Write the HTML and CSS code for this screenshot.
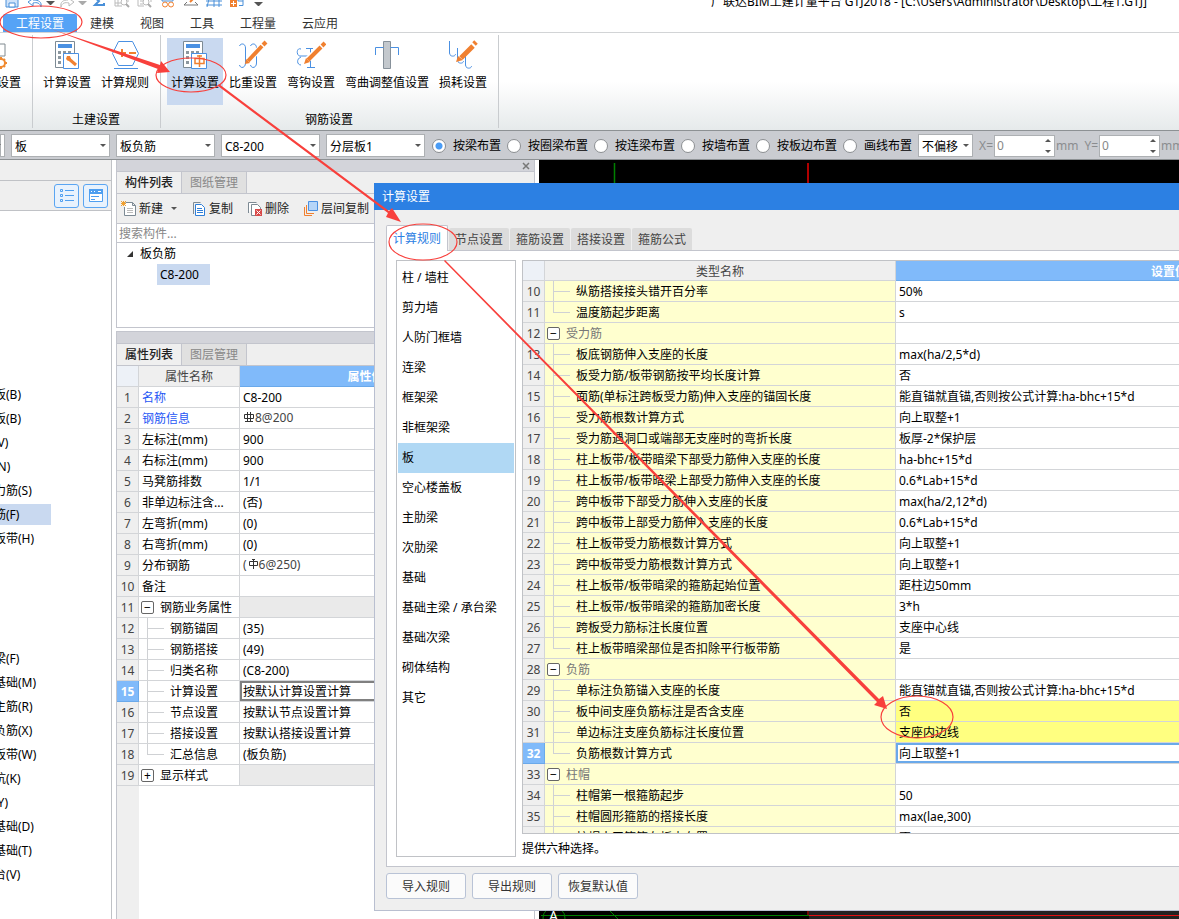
FILE: index.html
```html
<!DOCTYPE html>
<html lang="zh-CN">
<head>
<meta charset="utf-8">
<title>广联达BIM土建计量平台 GTJ2018</title>
<link rel="stylesheet" href="styles.css">
</head>
<body>
<div class="app">
  <header class="titlebar">
    <div class="quick">
      <button class="qbtn" aria-label="保存"><svg width="16" height="14" viewBox="0 0 16 14"><path d="M2 -2h12v9H2z" fill="#cfe3fa" stroke="#4a90d9"/><path d="M5 3h6v4H5z" fill="#fff" stroke="#4a90d9"/></svg></button>
      <button class="qbtn" aria-label="撤销"><svg width="16" height="14" viewBox="0 0 16 14"><path d="M7-2L1 2l5 4V3c4-1 7 0 8 4 1-5-2-7-8-7" fill="none" stroke="#4a90d9"/></svg></button>
      <button class="qcaret" aria-label="撤销列表"></button>
      <button class="qbtn" aria-label="恢复"><svg width="16" height="14" viewBox="0 0 16 14"><path d="M9-2l6 4-5 4V3C6 2 3 3 2 7 1 2 4 0 9 0" fill="none" stroke="#bbb"/></svg></button>
      <button class="qcaret dim" aria-label="恢复列表"></button>
      <button class="qbtn" aria-label="汇总"><svg width="16" height="14" viewBox="0 0 16 14"><path d="M4-2l4 3-4 4h9V3" fill="none" stroke="#4a90d9" stroke-width="2"/></svg></button>
      <button class="qbtn" aria-label="查看工程量"><svg width="16" height="14" viewBox="0 0 16 14"><path d="M1-1v7h7M1 3h6M4 0v6M14-1v3" fill="none" stroke="#bbb"/><circle cx="10" cy="2" r="3" fill="#fff" stroke="#bbb"/><path d="M12 4l3 3" stroke="#aaa" stroke-width="2"/></svg></button>
      <button class="qbtn" aria-label="查找"><svg width="16" height="14" viewBox="0 0 16 14"><path d="M1-1v7h6M3 1h3M3 4h3M14-1v3" fill="none" stroke="#bbb"/><circle cx="9" cy="2" r="3" fill="#fff" stroke="#bbb"/><path d="M11 4l3 3" stroke="#aaa" stroke-width="2"/></svg></button>
      <button class="qbtn" aria-label="查看"><svg width="16" height="14" viewBox="0 0 16 14"><path d="M2-1v2h11v-2" fill="none" stroke="#4a90d9"/><circle cx="5" cy="4.500" r="2.500" fill="none" stroke="#f08030"/><circle cx="11" cy="4.500" r="2.500" fill="none" stroke="#f08030"/></svg></button>
      <button class="qbtn" aria-label="编辑"><svg width="16" height="14" viewBox="0 0 16 14"><path d="M7 2l5-5" stroke="#f08030" stroke-width="2"/><path d="M4 2L1 5h14l-3-3" fill="none" stroke="#777"/></svg></button>
      <button class="qbtn" aria-label="轴网"><svg width="16" height="14" viewBox="0 0 16 14"><path d="M3-1L1 7M8-1v8M13-1v8M0 1h16M0 5h16" fill="none" stroke="#4a90d9"/></svg></button>
      <button class="qbtn" aria-label="添加"><svg width="16" height="14" viewBox="0 0 16 14"><path d="M1 0h7v7H1z" fill="#f08030"/><path d="M2 3.500h5M4.500 1v5" stroke="#fff"/><path d="M9-2v3h5v-3M10 5.500h4V1" fill="none" stroke="#4a90d9"/></svg></button>
      <button class="qcaret low" aria-label="自定义快速访问"></button>
    </div>
    <h1 class="app-title">广联达BIM土建计量平台 GTJ2018 - [C:\Users\Administrator\Desktop\工程1.GTJ]</h1>
  </header>

  <nav class="menu">
    <a href="#" class="menu-tab active">工程设置</a>
    <a href="#" class="menu-tab">建模</a>
    <a href="#" class="menu-tab">视图</a>
    <a href="#" class="menu-tab">工具</a>
    <a href="#" class="menu-tab">工程量</a>
    <a href="#" class="menu-tab">云应用</a>
  </nav>

  <section class="ribbon">
    <div class="group group-cut">
      <div class="tools">
        <button class="tool"><svg width="30" height="30" viewBox="0 0 30 30"><path d="M12 4h11v12H12M17 4v7M12 26h6" fill="none" stroke="#808a90"/><circle cx="19" cy="23" r="4" fill="#fff" stroke="#f08a30" stroke-width="2"/><path d="M19 17v2M19 27v2M13 23h2M23 23h2M15 19l1 1M22 26l1 1M15 27l1-1M22 20l1-1" stroke="#f08a30" stroke-width="2"/></svg>楼层设置</button>
      </div>
    </div>
    <div class="group">
      <div class="tools">
        <button class="tool"><svg width="30" height="30" viewBox="0 0 30 30"><path d="M3.500 1.500h19v26h-19z" fill="#fff" stroke="#7d8a94"/><path d="M6 4h14v4H6z" fill="#4a90e2"/><path d="M6 11h3v3H6zM11 11h3v3h-3zM16 11h3v3h-3zM6 16h3v3H6zM6 21h3v3H6z" fill="#8c979f"/><path d="M11.500 13.500h15v15h-15z" fill="#fff" stroke="#4a90e2"/><path d="M17 19l7 6" stroke="#f08030" stroke-width="3"/><path d="M15 16l3 0 1 3-3 2-2-2z" fill="#f08030"/></svg>计算设置</button>
        <button class="tool"><svg width="30" height="30" viewBox="0 0 30 30"><path d="M8.500 1.500h14l6 12-6 12h-14l-6-12zM4 28.500h24" fill="none" stroke="#4a90e2"/><path d="M8 13h8M12 9v8M19 13h7" stroke="#f08030" stroke-width="2"/></svg>计算规则</button>
      </div>
      <div class="group-name">土建设置</div>
    </div>
    <div class="group">
      <div class="tools">
        <button class="tool selected"><svg width="30" height="30" viewBox="0 0 30 30"><path d="M3.500 1.500h19v26h-19z" fill="#fff" stroke="#7d8a94"/><path d="M6 4h14v4H6z" fill="#4a90e2"/><path d="M6 11h3v3H6zM11 11h3v3h-3zM16 11h3v3h-3zM6 16h3v3H6zM6 21h3v3H6z" fill="#8c979f"/><path d="M11.500 13.500h15v15h-15z" fill="#fff" stroke="#4a90e2"/><path d="M15 18.500h9v5h-9zM19.500 15v12M17 16h5" fill="none" stroke="#f08030" stroke-width="1.500"/></svg>计算设置</button>
        <button class="tool"><svg width="30" height="30" viewBox="0 0 30 30"><path d="M1.500 6c1-3 6-3 6 2v15c0 5-5 6-6 2M12.500 6c1-3 6-3 6 2v15c0 5-5 6-6 2" fill="none" stroke="#4a90e2"/><path d="M12 19L26 4" stroke="#fff" stroke-width="6"/><path d="M10 21L24 6" stroke="#f08030" stroke-width="4"/><path d="M25 5l3-3" stroke="#f08030" stroke-width="4"/><path d="M7 24l1-5 4 4z" fill="#f08030"/></svg>比重设置</button>
        <button class="tool"><svg width="30" height="30" viewBox="0 0 30 30"><path d="M5 9c-5-2-5 8 0 7h9M5 17c-5 2-4 8 0 8M17 8.500h-7M14.500 8v19M11 27.500h8" fill="none" stroke="#4a90e2"/><path d="M12 19L26 5" stroke="#fff" stroke-width="6"/><path d="M12 20L25 7" stroke="#f08030" stroke-width="4"/><path d="M26 6l3-3" stroke="#f08030" stroke-width="4"/><path d="M8 24l2-6 4 4z" fill="#f08030"/></svg>弯钩设置</button>
        <button class="tool"><svg width="30" height="30" viewBox="0 0 30 30"><path d="M11.500 1.500h7v27h-7z" fill="#c3c8cd" stroke="#87919a"/><path d="M3.500 15V7.500h8M18.500 7.500h8V15" fill="none" stroke="#4a90e2"/></svg>弯曲调整值设置</button>
        <button class="tool"><svg width="30" height="30" viewBox="0 0 30 30"><path d="M1.500 1v12c0 4 6 4 6 1M9.500 8v12c0 4 6 4 6 1M17.500 16v9c0 4 6 4 6 1" fill="none" stroke="#4a90e2"/><path d="M13 18L25 6" stroke="#f08030" stroke-width="5"/><path d="M26 4l2-2" stroke="#f08030" stroke-width="5"/><path d="M8 22l2-6 5 4z" fill="#f08030"/></svg>损耗设置</button>
      </div>
      <div class="group-name">钢筋设置</div>
    </div>
  </section>

  <form class="options">
    <span class="select sel-cut"><select aria-label="楼层"><option></option></select></span>
    <span class="select"><select aria-label="构件类别"><option>板</option></select></span>
    <span class="select"><select aria-label="构件类型"><option>板负筋</option></select></span>
    <span class="select"><select aria-label="构件"><option>C8-200</option></select></span>
    <span class="select"><select aria-label="分层"><option>分层板1</option></select></span>
    <span class="placing">
      <label class="radio"><input type="radio" name="place" checked>按梁布置</label>
      <label class="radio"><input type="radio" name="place">按圈梁布置</label>
      <label class="radio"><input type="radio" name="place">按连梁布置</label>
      <label class="radio"><input type="radio" name="place">按墙布置</label>
      <label class="radio"><input type="radio" name="place">按板边布置</label>
      <label class="radio"><input type="radio" name="place">画线布置</label>
    </span>
    <span class="select sel-small"><select aria-label="偏移"><option>不偏移</option></select></span>
    <label class="offset">X=<span class="spin"><input type="text" value="0" disabled></span>mm</label>
    <label class="offset">Y=<span class="spin"><input type="text" value="0" disabled></span>mm</label>
  </form>

  <main class="workspace">
    <aside class="modules">
      <div class="modules-head"></div>
      <div class="modules-bar">
        <button class="view-btn" aria-label="列表视图"><svg width="18" height="18" viewBox="0 0 18 18"><path d="M2.500 2.500h2v2h-2zM2.500 7.500h2v2h-2zM2.500 12.500h2v2h-2zM7 3.500h9M7 8.500h9M7 13.500h9" fill="none" stroke="#4f9ff0"/></svg></button>
        <button class="view-btn" aria-label="卡片视图"><svg width="18" height="18" viewBox="0 0 18 18"><path d="M2.500 2.500h13v12h-13z" fill="#fff" stroke="#4f9ff0"/><path d="M2 2h14v5H2z" fill="#4f9ff0"/><path d="M4 4.500h1M7 4.500h1M11 4.500h3" stroke="#fff"/><path d="M4 9.500h8M4 12.500h4" stroke="#4f9ff0"/></svg></button>
      </div>
      <div class="modules-list">
        <ul>
          <li>现浇板(B)</li><li>螺旋板(B)</li><li>柱帽(V)</li><li>板洞(N)</li><li>板受力筋(S)</li><li><span class="current">板负筋(F)</span></li><li>楼层板带(H)</li>
        </ul>
        <ul>
          <li>基础梁(F)</li><li>筏板基础(M)</li><li>筏板主筋(R)</li><li>筏板负筋(X)</li><li>基础板带(W)</li><li>集水坑(K)</li><li>柱墩(Y)</li><li>独立基础(D)</li><li>条形基础(T)</li><li>桩承台(V)</li>
        </ul>
      </div>
    </aside>

    <div class="docks">
      <section class="dock">
        <div class="dock-strip"><button class="close" aria-label="关闭"><svg width="8" height="8" viewBox="0 0 8 8"><path d="M1 1l6 6M7 1L1 7" stroke="#777" stroke-width="1.500"/></svg></button></div>
        <div class="dock-tabs"><button class="dock-tab on">构件列表</button><button class="dock-tab">图纸管理</button></div>
        <div class="dock-tools">
          <button class="act"><svg width="16" height="16" viewBox="0 0 16 16"><path d="M4.500 1.500h7l3 3v10h-11V6M11.500 1.500v3h3" fill="#fff" stroke="#7d8a94"/><path d="M6 7.500h6M6 9.500h6M6 11.500h6" stroke="#bbb"/><path d="M0 0l5 5M5 0L0 5M2.500 0v5M0 2.500h5" stroke="#f0a030"/></svg>新建<i class="tri"></i></button>
          <button class="act"><svg width="16" height="16" viewBox="0 0 16 16"><path d="M2.500 13V1.500h7" fill="none" stroke="#7d8a94"/><path d="M4.500 3.500h6l3 3v8h-9z" fill="#fff" stroke="#2f7fd8"/><path d="M6 7.500h5M6 9.500h6M6 11.500h6" stroke="#2f7fd8"/></svg>复制</button>
          <button class="act"><svg width="16" height="16" viewBox="0 0 16 16"><path d="M1.500 12V1.500h8M4.500 14.500v-11h6l3 3v8z" fill="#fff" stroke="#7d8a94"/><path d="M8 8h7v7H8z" fill="#d84a4a"/><path d="M9.500 9.500l4 4M13.500 9.500l-4 4" stroke="#fff"/></svg>删除</button>
          <button class="act"><svg width="16" height="16" viewBox="0 0 16 16"><path d="M1.500 6v8.500H9M3.500 4v8.500H11" fill="none" stroke="#f08030"/><path d="M5.500.500h9v9h-9z" fill="#b5d5f8" stroke="#4a90e2"/></svg>层间复制</button>
        </div>
        <input class="search" type="text" placeholder="搜索构件..." aria-label="搜索构件">
        <div class="tree">
          <div class="tree-root"><i class="open"></i>板负筋</div>
          <div class="tree-leaf">C8-200</div>
        </div>
      </section>

      <section class="dock grow">
        <div class="dock-strip"></div>
        <div class="dock-tabs"><button class="dock-tab on">属性列表</button><button class="dock-tab">图层管理</button></div>
        <div class="prop-wrap">
        <table class="grid props">
          <colgroup><col class="c-num"><col class="c-prop"><col class="c-val"><col></colgroup>
          <thead><tr><th class="corner"></th><th>属性名称</th><th class="hot">属性值</th><th>附加</th></tr></thead>
          <tbody>
            <tr><th>1</th><td class="link">名称</td><td>C8-200</td><td></td></tr>
            <tr><th>2</th><td class="link">钢筋信息</td><td class="steel"><svg width="12" height="12" viewBox="-1 0 12 12"><path d="M.500 2.500h9v4h-9zM3.500 0v9M6.500 0v9M1 9.500h8" fill="none" stroke="#333"/></svg>8@200</td><td></td></tr>
            <tr><th>3</th><td>左标注(mm)</td><td>900</td><td></td></tr>
            <tr><th>4</th><td>右标注(mm)</td><td>900</td><td></td></tr>
            <tr><th>5</th><td>马凳筋排数</td><td>1/1</td><td></td></tr>
            <tr><th>6</th><td>非单边标注含...</td><td>(否)</td><td></td></tr>
            <tr><th>7</th><td>左弯折(mm)</td><td>(0)</td><td></td></tr>
            <tr><th>8</th><td>右弯折(mm)</td><td>(0)</td><td></td></tr>
            <tr><th>9</th><td>分布钢筋</td><td class="steel">(<svg width="12" height="12" viewBox="0 0 12 12"><path d="M2.500 2.500h8v4h-8zM6.500 0v10M5 .500h3" fill="none" stroke="#333"/></svg>6@250)</td><td></td></tr>
            <tr><th>10</th><td>备注</td><td></td><td></td></tr>
            <tr><th>11</th><td class="branch"><button class="fold" aria-label="折叠">−</button>钢筋业务属性</td><td class="void"></td><td class="void"></td></tr>
            <tr><th>12</th><td class="leaf">钢筋锚固</td><td>(35)</td><td></td></tr>
            <tr><th>13</th><td class="leaf">钢筋搭接</td><td>(49)</td><td></td></tr>
            <tr><th>14</th><td class="leaf">归类名称</td><td>(C8-200)</td><td></td></tr>
            <tr><th class="cur">15</th><td class="leaf">计算设置</td><td class="focus-dark">按默认计算设置计算</td><td></td></tr>
            <tr><th>16</th><td class="leaf">节点设置</td><td>按默认节点设置计算</td><td></td></tr>
            <tr><th>17</th><td class="leaf">搭接设置</td><td>按默认搭接设置计算</td><td></td></tr>
            <tr><th>18</th><td class="leaf last">汇总信息</td><td>(板负筋)</td><td></td></tr>
            <tr><th>19</th><td class="branch"><button class="fold" aria-label="展开">+</button>显示样式</td><td class="void"></td><td class="void"></td></tr>
          </tbody>
        </table>
        </div>
      </section>
    </div>

    <div class="canvas">
      <svg width="640" height="23" viewBox="0 0 640 23"><path d="M75.500 3v20" stroke="#008000" stroke-width="1.500"/><path d="M269 3v20" stroke="#b00000" stroke-width="2"/></svg>
      <svg width="640" height="8" viewBox="0 0 640 8"><path d="M270 0h370v8H270z" fill="#222"/><circle cx="15" cy="7" r="11" fill="none" stroke="#008000"/><path d="M2 4.500h268M71 0l8 8" stroke="#008000"/><path d="M269 0v4M270 4.500h370" stroke="#e01010"/><text class="axis" x="10" y="10">A</text></svg>
    </div>
  </main>

  <section class="dialog" role="dialog" aria-label="计算设置">
    <h2 class="dialog-title">计算设置</h2>
    <div class="dialog-body">
      <div class="tabs">
        <button class="tab on">计算规则</button><button class="tab">节点设置</button><button class="tab">箍筋设置</button><button class="tab">搭接设置</button><button class="tab">箍筋公式</button>
      </div>
      <div class="pane">
        <ul class="kinds">
          <li>柱 / 墙柱</li><li>剪力墙</li><li>人防门框墙</li><li>连梁</li><li>框架梁</li><li>非框架梁</li><li class="on">板</li><li>空心楼盖板</li><li>主肋梁</li><li>次肋梁</li><li>基础</li><li>基础主梁 / 承台梁</li><li>基础次梁</li><li>砌体结构</li><li>其它</li>
        </ul>
        <div class="rules-col">
          <div class="rules-wrap">
          <table class="grid rules">
            <colgroup><col class="c-num"><col class="c-rule"><col class="c-set"></colgroup>
            <thead><tr><th class="corner"></th><th>类型名称</th><th class="hot">设置值</th></tr></thead>
            <tbody>
              <tr><th>10</th><td class="leaf">纵筋搭接接头错开百分率</td><td>50%</td></tr>
              <tr><th>11</th><td class="leaf last">温度筋起步距离</td><td>s</td></tr>
              <tr><th>12</th><td class="branch"><button class="fold" aria-label="折叠">−</button>受力筋</td><td></td></tr>
              <tr><th>13</th><td class="leaf">板底钢筋伸入支座的长度</td><td>max(ha/2,5*d)</td></tr>
              <tr><th>14</th><td class="leaf">板受力筋/板带钢筋按平均长度计算</td><td>否</td></tr>
              <tr><th>15</th><td class="leaf">面筋(单标注跨板受力筋)伸入支座的锚固长度</td><td>能直锚就直锚,否则按公式计算:ha-bhc+15*d</td></tr>
              <tr><th>16</th><td class="leaf">受力筋根数计算方式</td><td>向上取整+1</td></tr>
              <tr><th>17</th><td class="leaf">受力筋遇洞口或端部无支座时的弯折长度</td><td>板厚-2*保护层</td></tr>
              <tr><th>18</th><td class="leaf">柱上板带/板带暗梁下部受力筋伸入支座的长度</td><td>ha-bhc+15*d</td></tr>
              <tr><th>19</th><td class="leaf">柱上板带/板带暗梁上部受力筋伸入支座的长度</td><td>0.6*Lab+15*d</td></tr>
              <tr><th>20</th><td class="leaf">跨中板带下部受力筋伸入支座的长度</td><td>max(ha/2,12*d)</td></tr>
              <tr><th>21</th><td class="leaf">跨中板带上部受力筋伸入支座的长度</td><td>0.6*Lab+15*d</td></tr>
              <tr><th>22</th><td class="leaf">柱上板带受力筋根数计算方式</td><td>向上取整+1</td></tr>
              <tr><th>23</th><td class="leaf">跨中板带受力筋根数计算方式</td><td>向上取整+1</td></tr>
              <tr><th>24</th><td class="leaf">柱上板带/板带暗梁的箍筋起始位置</td><td>距柱边50mm</td></tr>
              <tr><th>25</th><td class="leaf">柱上板带/板带暗梁的箍筋加密长度</td><td>3*h</td></tr>
              <tr><th>26</th><td class="leaf">跨板受力筋标注长度位置</td><td>支座中心线</td></tr>
              <tr><th>27</th><td class="leaf last">柱上板带暗梁部位是否扣除平行板带筋</td><td>是</td></tr>
              <tr><th>28</th><td class="branch"><button class="fold" aria-label="折叠">−</button>负筋</td><td></td></tr>
              <tr><th>29</th><td class="leaf">单标注负筋锚入支座的长度</td><td>能直锚就直锚,否则按公式计算:ha-bhc+15*d</td></tr>
              <tr><th>30</th><td class="leaf">板中间支座负筋标注是否含支座</td><td class="changed">否</td></tr>
              <tr><th>31</th><td class="leaf">单边标注支座负筋标注长度位置</td><td class="changed">支座内边线</td></tr>
              <tr><th class="cur">32</th><td class="leaf last">负筋根数计算方式</td><td class="focus-blue">向上取整+1</td></tr>
              <tr><th>33</th><td class="branch"><button class="fold" aria-label="折叠">−</button>柱帽</td><td></td></tr>
              <tr><th>34</th><td class="leaf">柱帽第一根箍筋起步</td><td>50</td></tr>
              <tr><th>35</th><td class="leaf">柱帽圆形箍筋的搭接长度</td><td>max(lae,300)</td></tr>
              <tr><th></th><td class="leaf">柱帽水平箍筋在板内布置</td><td>否</td></tr>
            </tbody>
          </table>
          </div>
          <p class="hint">提供六种选择。</p>
        </div>
      </div>
      <div class="buttons">
        <button class="btn">导入规则</button><button class="btn">导出规则</button><button class="btn">恢复默认值</button>
      </div>
    </div>
  </section>

  <svg class="marks" width="1179" height="919" viewBox="0 0 1179 919" aria-hidden="true">
    <g fill="none" stroke="#f8403c" stroke-width="1.200">
      <ellipse cx="41" cy="22" rx="41" ry="16"/>
      <ellipse cx="191" cy="75" rx="35" ry="17"/>
      <ellipse cx="423" cy="242" rx="34" ry="18"/>
      <ellipse cx="917" cy="717" rx="36" ry="21"/>
    </g>
    <g fill="#f8403c">
      <path d="M51 29L160 65l1-4 9 11-13 1 1-4z"/>
      <path d="M219 84l170 127 3-3 9 14-15-5 2-4L218 86z"/>
      <path d="M445 260l434 439 4-3 4 13-13-4 3-3L444 261z"/>
    </g>
  </svg>
</div>
</body>
</html>
```
FILE: styles.css
```css
* { box-sizing: border-box; }

body {
  margin: 0;
  background: #fff;
  color: #000;
  font: 12px/20px "Noto Sans", "Noto Sans CJK SC", sans-serif;
}

button, input, select {
  font: inherit;
  color: inherit;
  margin: 0;
}

button {
  padding: 0;
  border: 0;
  background: none;
  white-space: nowrap;
}

ul {
  margin: 0;
  padding: 0;
  list-style: none;
}

.app {
  position: relative;
  display: flex;
  flex-direction: column;
  height: 100vh;
  overflow: hidden;
}

/* title bar and menu */
.titlebar {
  display: flex;
  justify-content: space-between;
  align-items: flex-start;
  height: 14px;
  flex: none;
}

.quick {
  display: flex;
  align-items: flex-start;
}

.qbtn {
  display: flex;
  justify-content: center;
  width: 23px;
  height: 14px;
}

.qcaret {
  width: 9px;
  height: 6px;
}

.qcaret::after {
  content: "";
  display: block;
  border: 4px solid transparent;
  border-top-color: #555;
  border-bottom: 0;
}

.qcaret.dim::after { border-top-color: #aaa; }
.qcaret.low { margin: 1px 0 0 6px; }

.app-title {
  margin: 0;
  padding-right: 32px;
  font-size: 12px;
  font-weight: 400;
  line-height: 4px;
  white-space: nowrap;
}

.menu {
  display: flex;
  flex: none;
  padding-left: 3px;
  border-bottom: 1px solid #d2d4d6;
}

.menu-tab {
  padding: 1px 13px 0;
  line-height: 17px;
  color: #333;
  text-decoration: none;
}

.menu-tab.active {
  background: #55a3f6;
  border-radius: 2px 2px 0 0;
  color: #fff;
}

/* ribbon */
.ribbon {
  display: flex;
  flex: none;
  height: 97px;
  padding: 2px 0;
  background: linear-gradient(#fff 50%, #e6eaeb);
}

.group {
  display: flex;
  flex-direction: column;
  align-items: center;
  padding: 3px 7px 0 6px;
  border-right: 1px solid #c9cccf;
}

.group-cut {
  width: 33px;
  align-items: flex-end;
  overflow: hidden;
}

.tools {
  display: flex;
  gap: 2px;
}

.group-name { margin-top: 5px; }

.tool {
  display: flex;
  flex-direction: column;
  align-items: center;
  height: 67px;
  padding: 2px 4px 0;
  gap: 3px;
}

.tool.selected { background: #c9d9f0; }

/* option bar */
.options {
  display: flex;
  flex: none;
  align-items: center;
  gap: 6px;
  height: 30px;
  border-top: 1px solid #8d9194;
  border-bottom: 1px solid #8d9194;
  background: #caccd1;
  line-height: 22px;
  white-space: nowrap;
}

.select {
  position: relative;
  flex: none;
  width: 99px;
}

.sel-cut { width: 5px; }
.sel-small { width: 55px; }

.select select {
  display: block;
  appearance: none;
  width: 100%;
  height: 23px;
  padding: 1px 3px 0;
  border: 1px solid #adb0b3;
  border-radius: 0;
  background: #fff;
}

.sel-cut select { padding: 0; }

.select::after {
  content: "";
  position: absolute;
  right: 4px;
  top: 10px;
  border: 3px solid transparent;
  border-top-color: #555;
  border-bottom: 0;
}

.placing {
  display: flex;
  flex: none;
  gap: 6px;
  padding: 1px 0 0 1px;
}

.radio {
  display: flex;
  align-items: center;
  flex: none;
  gap: 7px;
}

.radio input {
  appearance: none;
  width: 14px;
  height: 14px;
  border: 1px solid #8c8f92;
  border-radius: 50%;
  background: #fff;
}

.radio input:checked {
  background: radial-gradient(circle, #4a9cf5 3px, #fff 4px);
}

.offset {
  display: flex;
  align-items: center;
  flex: none;
  gap: 1px;
  padding-top: 1px;
  color: #8a8c8f;
}

.spin {
  position: relative;
  width: 61px;
}

.spin input {
  display: block;
  width: 100%;
  height: 22px;
  padding: 0 2px;
  border: 1px solid #adb0b3;
  background: #fff;
  color: #888;
}

.spin::before, .spin::after {
  content: "";
  position: absolute;
  right: 4px;
  border: 3px solid transparent;
}

.spin::before {
  top: 4px;
  border-bottom-color: #555;
  border-top: 0;
}

.spin::after {
  bottom: 4px;
  border-top-color: #555;
  border-bottom: 0;
}

/* workspace */
.workspace {
  display: flex;
  flex: 1;
  min-height: 0;
}

.modules {
  flex: none;
  width: 112px;
  border-right: 1px solid #c0c2c6;
  overflow: hidden;
}

.modules-head {
  height: 21px;
  background: #efefef;
  border-bottom: 1px solid #c0c2c6;
}

.modules-bar {
  display: flex;
  justify-content: flex-end;
  align-items: center;
  gap: 4px;
  height: 30px;
  padding-right: 3px;
  background: #efefef;
  border-bottom: 1px solid #c0c2c6;
}

.view-btn {
  display: grid;
  place-items: center;
  width: 25px;
  height: 24px;
  border: 1px solid #5aa5f2;
  border-radius: 3px;
  background: #e8f2fd;
}

/* the list is scrolled sideways, so only the ends of the names show */
.modules-list {
  margin-left: -30px;
  padding-top: 172px;
}

.modules-list ul + ul { padding-top: 96px; }

.modules-list li {
  line-height: 24px;
  white-space: nowrap;
}

.current {
  display: inline-block;
  width: 81px;
  line-height: 21px;
  background: #c9d9f0;
}

.docks {
  display: flex;
  flex: none;
  flex-direction: column;
  gap: 3px;
  width: 419px;
  margin: 0 4px;
}

.dock {
  display: flex;
  flex-direction: column;
  border: 1px solid #c3c5cd;
  border-top: 0;
}

.dock.grow {
  flex: 1;
  min-height: 0;
  border-top: 1px solid #c3c5cd;
  border-bottom: 0;
}

.dock-strip {
  display: flex;
  justify-content: flex-end;
  align-items: center;
  height: 12px;
  padding-right: 4px;
  background: #d3d4da;
  border-bottom: 1px solid #c3c5cd;
  flex: none;
}

.close {
  display: flex;
}

.dock-tabs {
  display: flex;
  flex: none;
  height: 22px;
  background: #efefef;
  border-bottom: 1px solid #c3c5cd;
}

.dock-tab {
  width: 65px;
  border-right: 1px solid #c3c5cd;
  background: #e0e0e0;
  color: #888;
}

.dock-tab.on {
  background: #efefef;
  color: #222;
  font-weight: 500;
}

.dock-tools {
  display: flex;
  gap: 14px;
  height: 30px;
  padding-left: 4px;
  background: #efefef;
  border-bottom: 1px solid #c3c5cd;
}

.act {
  display: flex;
  align-items: center;
  gap: 2px;
  color: #222;
}

.tri {
  margin-left: 6px;
  border: 3px solid transparent;
  border-top-color: #555;
  border-bottom: 0;
}

.search {
  height: 19px;
  padding: 1px 2px 0;
  border: 0;
  border-bottom: 1px solid #c3c5cd;
}

.search::placeholder { color: #888; }

.tree {
  height: 84px;
}

.tree-root {
  display: flex;
  align-items: center;
  gap: 7px;
  height: 21px;
  padding-left: 10px;
}

.open {
  border-left: 6px solid transparent;
  border-bottom: 6px solid #333;
}

.tree-leaf {
  width: 53px;
  margin-left: 40px;
  padding-left: 3px;
  line-height: 21px;
  background: #c9d9f0;
}

.canvas {
  display: flex;
  flex: 1;
  flex-direction: column;
  justify-content: space-between;
  min-width: 0;
  background: #000;
  overflow: hidden;
}

.canvas svg { flex: none; }

.axis {
  fill: #fff;
  font-size: 14px;
}

/* grids */
.grid {
  border-collapse: separate;
  border-spacing: 0;
  table-layout: fixed;
}

.grid th, .grid td {
  height: 21px;
  padding: 2px 3px 0;
  border-right: 1px solid #d3d5d8;
  border-bottom: 1px solid #d3d5d8;
  font-weight: 400;
  line-height: 18px;
  text-align: left;
  white-space: nowrap;
  overflow: hidden;
}

.grid th {
  padding: 2px 0 0;
  background: #efefef;
  color: #444;
  text-align: center;
}

.grid .corner { background: #edf1f7; }

.grid .hot, .grid .cur {
  background: #80bafa;
  border-color: #6aa9ea;
  color: #fff;
  font-weight: 700;
}

.c-num { width: 22px; }
.c-prop { width: 101px; }
.c-val { width: 252px; }
.c-rule { width: 351px; }
.c-set { width: 547px; }

.grid .link { color: #1f57f5; }
.grid .void { background: #eaeaea; }
.grid .changed { background: #ffff80; }

.grid .steel {
  padding-top: 0;
  color: #444;
}

.steel svg { vertical-align: -2px; }

.grid .focus-dark { box-shadow: inset 0 0 0 2px #808080; }
.grid .focus-blue { box-shadow: inset 0 0 0 2px #6aa9ea; }

.grid .branch { padding-left: 2px; }

.fold {
  width: 13px;
  height: 13px;
  margin-right: 6px;
  border: 1px solid #666;
  border-radius: 2px;
  background: #fff;
  line-height: 11px;
  color: #000;
  vertical-align: 0;
}

.grid .leaf {
  padding-left: 31px;
  background-image: linear-gradient(#cfd1d4, #cfd1d4), linear-gradient(#cfd1d4, #cfd1d4);
  background-position: 8px 0, 8px 10px;
  background-size: 1px 100%, 17px 1px;
  background-repeat: no-repeat;
}

.grid .leaf.last { background-size: 1px 10px, 17px 1px; }

.prop-wrap {
  flex: 1;
  min-height: 0;
  background: linear-gradient(90deg, #efefef 22px, #fff 22px);
  overflow: hidden;
}

.props { width: 100%; }

/* dialog floats over the workspace */
.dialog {
  position: absolute;
  left: 374px;
  right: 0;
  top: 183px;
  bottom: 8px;
  display: flex;
  flex-direction: column;
  background: #efefef;
}

.dialog-title {
  margin: 0;
  padding-left: 8px;
  background: #2c80e3;
  color: #fff;
  font-size: 12px;
  font-weight: 400;
  line-height: 27px;
}

.dialog-body {
  display: flex;
  flex: 1;
  flex-direction: column;
  min-height: 0;
  padding: 15px 0 11px 11px;
  border-left: 1px solid #b9bfd0;
  border-bottom: 1px solid #b9bfd0;
}

.tabs {
  display: flex;
  align-items: flex-end;
  flex: none;
  gap: 1px;
  height: 25px;
}

.tab {
  width: 60px;
  height: 22px;
  padding-top: 2px;
  border-radius: 2px 2px 0 0;
  background: #dcdcdc;
  color: #444;
}

.tab.on {
  position: relative;
  width: 62px;
  height: 26px;
  margin-bottom: -1px;
  padding-top: 0;
  border: 1px solid #c3c5cd;
  border-bottom: 0;
  background: #fff;
  color: #2c80e3;
}

.pane {
  display: flex;
  flex: 1;
  gap: 6px;
  min-height: 0;
  padding: 9px 0 9px 9px;
  border: 1px solid #c3c5cd;
  border-right: 0;
  background: #fff;
}

.kinds {
  flex: none;
  width: 120px;
  padding: 2px 1px;
  border: 1px solid #c0c2c6;
}

.kinds li {
  padding-left: 4px;
  line-height: 30px;
}

.kinds .on { background: #b0d8f4; }

.rules-col {
  display: flex;
  flex: 1;
  flex-direction: column;
  min-width: 0;
}

.rules-wrap {
  flex: 1;
  min-height: 0;
  border: 1px solid #c0c2c6;
  border-right: 0;
  overflow: hidden;
}

.rules { width: 920px; }
.rules thead th { height: 20px; line-height: 17px; }
.rules td:nth-child(2) { background-color: #ffffcf; }
.rules .branch { color: #777; }

.hint {
  margin: 0;
  height: 23px;
  line-height: 30px;
}

.buttons {
  display: flex;
  flex: none;
  gap: 6px;
  padding-top: 6px;
}

.btn {
  width: 80px;
  height: 26px;
  padding-top: 2px;
  border: 1px solid #b9c3d6;
  border-radius: 3px;
  background: #fbfbfb;
  color: #333;
}

/* red callouts drawn above everything */
.marks {
  position: absolute;
  left: 0;
  top: 0;
  pointer-events: none;
}
```
